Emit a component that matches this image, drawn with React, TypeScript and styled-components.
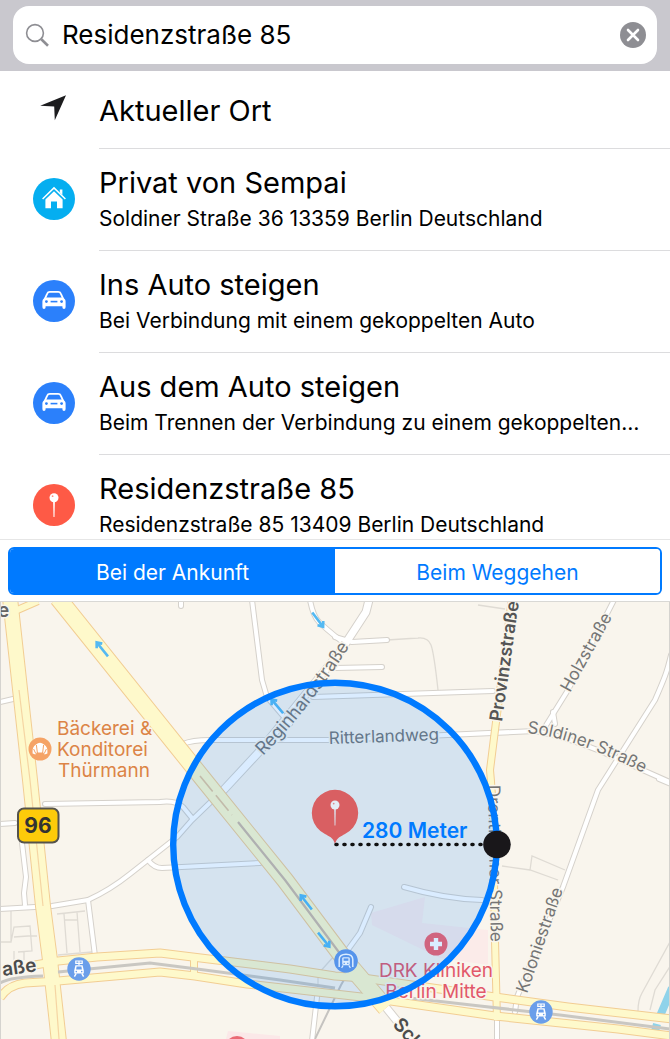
import React, { useState } from "react";
import styled, { createGlobalStyle } from "styled-components";

const GlobalStyle = createGlobalStyle`
  *, *::before, *::after { box-sizing: border-box; }
  body {
    margin: 0;
    background: #fff;
    color: #000;
    font-family: Inter, "Liberation Sans", sans-serif;
  }
  button, input { font: inherit; color: inherit; }
`;

const Page = styled.main`
  display: flex;
  flex-direction: column;
  min-height: 100vh;
`;

const SearchBar = styled.form`
  flex: none;
  padding: 6px 13px 7px;
  background: #c9c8ce;
`;

const SearchField = styled.label`
  display: flex;
  align-items: center;
  gap: 12px;
  height: 58px;
  padding: 0 11px 0 12px;
  border-radius: 16px;
  background: #fff;
`;

const SearchInput = styled.input`
  flex: 1;
  min-width: 0;
  padding: 0;
  border: 0;
  outline: 0;
  background: transparent;
  font-size: 26px;
  line-height: 36px;
`;

const ClearButton = styled.button`
  display: flex;
  flex: none;
  padding: 0;
  border: 0;
  background: none;
  cursor: pointer;
`;

const Results = styled.ul`
  flex: none;
  margin: 0;
  padding: 0;
  list-style: none;
`;

const ResultButton = styled.button`
  display: flex;
  align-items: flex-start;
  width: 100%;
  padding: 0 0 0 33px;
  border: 0;
  background: none;
  text-align: left;
  cursor: pointer;
`;

const IconSlot = styled.span<{ $compact?: boolean }>`
  display: flex;
  flex: none;
  width: 66px;
  padding-top: ${(p) => (p.$compact ? 16 : 29)}px;
`;

const Badge = styled.span<{ $color: string }>`
  display: flex;
  width: 42px;
  height: 42px;
  border-radius: 50%;
  background: ${(p) => p.$color};
`;

const ResultText = styled.span<{ $compact?: boolean; $last?: boolean }>`
  display: flex;
  flex: 1;
  flex-direction: column;
  gap: 6px;
  min-width: 0;
  padding: ${(p) => (p.$compact ? "22px 0 19px" : p.$last ? "16px 0 2px" : "16px 0 19px")};
  border-bottom: ${(p) => (p.$last ? "0" : "1px solid #dcdcde")};
`;

const Title = styled.span`
  font-size: 29px;
  line-height: 36px;
`;

const Subtitle = styled.span`
  font-size: 21px;
  line-height: 24px;
  white-space: nowrap;
`;

const SegmentBar = styled.div`
  flex: none;
  padding: 7px 8px 6px;
  border-top: 1px solid #e6e6e6;
  border-bottom: 1px solid #d9d8d5;
`;

const Segments = styled.div`
  display: grid;
  grid-template-columns: 1fr 1fr;
  overflow: hidden;
  border: 2px solid #007aff;
  border-radius: 6px;
`;

const Segment = styled.button<{ $active: boolean }>`
  height: 44px;
  padding: 4px 0 0;
  border: 0;
  background: ${(p) => (p.$active ? "#007aff" : "#fff")};
  color: ${(p) => (p.$active ? "#fff" : "#007aff")};
  font-size: 21px;
  line-height: 24px;
  cursor: pointer;
`;

const MapPane = styled.section`
  display: flex;
  flex: 1;
  min-height: 437px;
  background: #f9f5ed;
`;

const MapDrawing = styled.svg`
  flex: 1;
  width: 100%;
  min-width: 0;
  height: auto;
`;

const Label = styled.text<{ $size?: number; $weight?: number; $color?: string }>`
  font-size: ${(p) => p.$size ?? 17}px;
  font-weight: ${(p) => p.$weight ?? 400};
  fill: ${(p) => p.$color ?? "#757575"};
  stroke: #f9f5ed;
  stroke-width: 3px;
  stroke-linejoin: round;
  paint-order: stroke;
`;

const RadiusLabel = styled.text`
  font-size: 21px;
  font-weight: 600;
  fill: #007aff;
`;

const ShieldText = styled.text`
  font-size: 21px;
  font-weight: 700;
  fill: #333;
  text-anchor: middle;
`;

const SearchIcon = () => (
  <svg width="25" height="25" viewBox="0 0 25 25" fill="none" stroke="#8e8e93" aria-hidden="true">
    <circle cx="10" cy="10" r="8.4" strokeWidth="1.6" />
    <path d="M16.3 16.3 23 22.8" strokeWidth="2.6" />
  </svg>
);

const ClearIcon = () => (
  <svg width="26" height="26" viewBox="0 0 26 26" aria-hidden="true">
    <circle cx="13" cy="13" r="13" fill="#8e8e93" />
    <path d="m8 8 10 10M18 8 8 18" stroke="#fff" strokeWidth="2.6" strokeLinecap="round" />
  </svg>
);

const LocationIcon = () => (
  <svg width="42" height="42" viewBox="0 0 42 42" aria-hidden="true">
    <path d="M33 8.2 21.8 33.2 21.2 19.6 7.2 18.8Z" fill="#1c1c1e" />
  </svg>
);

const HomeIcon = () => (
  <svg width="42" height="42" viewBox="0 0 42 42" fill="#fff" aria-hidden="true">
    <path d="M21 13.2 12.4 21.4V30.2H18V23.4H24V30.2H29.6V21.4Z" />
    <path d="M9.6 21 21 9.9 32.4 21" fill="none" stroke="#fff" strokeWidth="1.5" />
    <path d="M26.8 11.4h2.6v5.6l-2.6-2.5Z" />
  </svg>
);

const CarIcon = () => (
  <svg width="42" height="42" viewBox="0 0 42 42" aria-hidden="true">
    <path
      d="M11.6 19.4 14.2 13.6Q14.9 11.9 16.8 11.9H25.2Q27.1 11.9 27.8 13.6L30.4 19.4"
      fill="none"
      stroke="#fff"
      strokeWidth="1.8"
    />
    <path
      d="M12 17.6H30L31.6 19Q32.6 20 32.6 21.4V27Q32.6 29 31 29T29.4 27.2V26.2H12.6V27.2Q12.6 29 11 29T9.4 27V21.4Q9.4 20 10.4 19Z"
      fill="#fff"
    />
    <circle cx="13.4" cy="21.6" r="1.4" fill="#2b80fb" />
    <circle cx="28.6" cy="21.6" r="1.4" fill="#2b80fb" />
    <path d="M17.6 21.6h6.8" stroke="#2b80fb" strokeWidth="1.6" />
  </svg>
);

const PinIcon = () => (
  <svg width="42" height="42" viewBox="0 0 42 42" aria-hidden="true">
    <path d="M20.1 17h1.8l-.4 16h-1Z" fill="#fff" />
    <circle cx="21" cy="13.7" r="4.5" fill="#fff" />
    <circle cx="19.6" cy="12.2" r=".9" fill="#ff8f80" />
  </svg>
);

interface Place {
  title: string;
  subtitle?: string;
  color?: string;
  icon: React.ReactNode;
}

const places: Place[] = [
  { title: "Aktueller Ort", icon: <LocationIcon /> },
  {
    title: "Privat von Sempai",
    subtitle: "Soldiner Straße 36 13359 Berlin Deutschland",
    color: "#05aef0",
    icon: <HomeIcon />,
  },
  {
    title: "Ins Auto steigen",
    subtitle: "Bei Verbindung mit einem gekoppelten Auto",
    color: "#2b80fb",
    icon: <CarIcon />,
  },
  {
    title: "Aus dem Auto steigen",
    subtitle: "Beim Trennen der Verbindung zu einem gekoppelten…",
    color: "#2b80fb",
    icon: <CarIcon />,
  },
  {
    title: "Residenzstraße 85",
    subtitle: "Residenzstraße 85 13409 Berlin Deutschland",
    color: "#fe5a46",
    icon: <PinIcon />,
  },
];

const sideStreets = [
  "M0 702 13 699",
  "M181 598V606",
  "M252 600 262 680 267 697 290 724",
  "M310 600Q313 616 319 622T340 640",
  "M335 637 352 642 387 640",
  "M335 668 382 667",
  "M313 697 493 691",
  "M183 744Q192 740 210 740L335 740 535 731Q560 735 600 751L672 783",
  "M614 600 568 690 545 727",
  "M553 712 555 724",
  "M671 655Q668 668 665 676T655 700L598 790 563 887 517 997 515 1012",
  "M659 779 671 784",
  "M45 804 160 802Q176 800 183 807L192 818",
  "M0 824 15 823",
  "M22 843 26 877 24 893 25 905",
  "M148 860Q154 868 162 868L260 863 268 860",
  "M88 900 95 956",
  "M317 997 312 1041",
  "M404 887Q445 899 482 900",
  "M371 907 360 933 347 951",
  "M0 909 52 906 88 900Q110 890 130 874L177 837 192 820 220 793",
  "M497 1018V1041",
];

const widerStreets = ["M369 600 366 612 340 652 258 753 218 796", "M384 1005 414 1042"];

const outlines = [
  "M387 640 418 638Q428 637 431 645T438 690",
  "M478 605 505 609",
  "M502 866 530 870 558 880M530 870 532 856 565 870",
  "M671 940 642 993Q638 1000 638 1011",
  "M671 965 655 990 650 1010",
  "M11 911V942H0M11 942 14 927 30 926 32 951 18 952M14 937 28 936M28 936H37M14 951V960M24 951V960",
  "M57 914 85 911M64 914 67 953M77 912 80 952M64 920H77M58 955 92 952",
  "M335 955 318 974V984",
];

const mainRoads = [
  { d: "M15 611 38 601", width: 6 },
  { d: "M512 598 496 722 490 770Q492 790 493 820L495 940 497 1020", width: 6 },
  { d: "M35 965 58 961 97 957 160 953 217 960 290 969 335 976 363 978 495 997 568 1007 672 1019", width: 7 },
  { d: "M0 998Q8 985 25 983L58 981 160 972 195 976 247 984 335 994 370 998 495 1016 618 1029 672 1036", width: 7 },
  { d: "M194 956V976", width: 6 },
  { d: "M10 598 30 780 43 906 50 960 59 1042", width: 14 },
  { d: "M58 598 204 780 285 880 345 960 386 1008", width: 16 },
];

const railways = [
  "M0 983Q10 977 43 976",
  "M58 972 150 963 197 969 280 980 335 988",
  "M410 998 480 1006 560 1015 670 1029",
];

const arrows = [
  { x: 102, y: 649, angle: -129 },
  { x: 318, y: 620, angle: 53 },
  { x: 277, y: 706, angle: -130 },
  { x: 306, y: 902, angle: -128 },
  { x: 324, y: 940, angle: 51 },
];

const TramMarker = ({ x, y }: { x: number; y: number }) => (
  <g transform={`translate(${x} ${y})`}>
    <circle r="11.7" fill="#6a9eea" />
    <path d="M-3.8-8H3.8M-3.2-8V-5.4M0-8V-4M3.2-8V-5.4M-3.8-5.6H3.8" stroke="#fff" strokeWidth="1.2" fill="none" />
    <path d="M-3.6-3.8H3.6L4.8 1.6V4.4H-4.8V1.6Z" fill="#fff" />
    <path d="M-2.4-2.4H2.4L2.9.4H-2.9Z" fill="#6a9eea" />
    <circle cx="-2.7" cy="2.6" r=".8" fill="#6a9eea" />
    <circle cx="2.7" cy="2.6" r=".8" fill="#6a9eea" />
    <path d="m-2.8 4.4-1.8 3.2M2.8 4.4l1.8 3.2" stroke="#fff" strokeWidth="1.4" />
  </g>
);

const RegionMap = () => (
  <MapDrawing
    viewBox="0 602 670 437"
    preserveAspectRatio="xMidYMid slice"
    role="img"
    aria-label="Umkreis von 280 Meter um Residenzstraße 85"
  >
    <rect y="602" width="670" height="437" fill="#f9f5ed" />
    <path d="M371 913 425 897 422 923 488 930V965L440 958 372 925Z" fill="#fbebe9" />
    <path d="M226 1039 228 1031 280 1036V1039Z" fill="#fbe8e8" />
    <path d="M672 988 660 1016M657 1024 654 1035" stroke="#8fd3ea" strokeWidth="8" fill="none" />

    <g fill="none" stroke="#dfdbd4" strokeWidth="1.3">
      {outlines.map((d) => <path key={d} d={d} />)}
    </g>
    <g fill="none" strokeLinecap="round" strokeLinejoin="round">
      <g stroke="#d5d1cb">
        {sideStreets.map((d) => <path key={d} d={d} strokeWidth="6" />)}
        {widerStreets.map((d) => <path key={d} d={d} strokeWidth="9" />)}
      </g>
      <path d="M352 966 341 985 314 1041" stroke="#c5c3c0" strokeWidth="2" />
      <g stroke="#fff">
        {sideStreets.map((d) => <path key={d} d={d} strokeWidth="4" />)}
        {widerStreets.map((d) => <path key={d} d={d} strokeWidth="7" />)}
      </g>
    </g>
    <g fill="none" strokeLinejoin="round">
      <g stroke="#f2cd93">
        {mainRoads.map((r) => <path key={r.d} d={r.d} strokeWidth={r.width + 2} />)}
      </g>
      <g stroke="#fef9cb">
        {mainRoads.map((r) => <path key={r.d} d={r.d} strokeWidth={r.width} />)}
      </g>
      <path d="M19 690 30 780 43 906M55 985 59 1039" stroke="#f5d5a3" strokeWidth="1.2" />
      <path d="M200 776 232 815" stroke="#e3c69c" strokeWidth="1.6" strokeDasharray="20 5" />
      <path d="M238 822 285 880 341 955" stroke="#cdb9a4" strokeWidth="2.2" />
    </g>
    <g fill="none" stroke="#c9c7c2" strokeWidth="3">
      {railways.map((d) => <path key={d} d={d} />)}
    </g>

    <g fill="none" stroke="#54b9f2" strokeWidth="2.6">
      {arrows.map((a) => (
        <path
          key={`${a.x}-${a.y}`}
          transform={`translate(${a.x} ${a.y}) rotate(${a.angle})`}
          d="M-9.5 0H8M4-3.6 8.5 0 4 3.6"
        />
      ))}
    </g>

    <defs>
      <path id="reginhardstrasse" d="M263 756Q318 700 362 626" />
      <path id="soldiner-strasse" d="M527 733Q580 738 660 782" />
    </defs>
    <Label $size={19} $weight={600} $color="#666" x="-2" y="617">e</Label>
    <Label $size={18}><textPath href="#reginhardstrasse">Reginhardstraße</textPath></Label>
    <Label transform="translate(329 744) rotate(-2)">Ritterlandweg</Label>
    <Label $size={18} $weight={600} $color="#555" transform="translate(502 722) rotate(-82)">Provinzstraße</Label>
    <Label transform="translate(570 693) rotate(-61)">Holzstraße</Label>
    <Label><textPath href="#soldiner-strasse">Soldiner Straße</textPath></Label>
    <Label transform="translate(488 785) rotate(89)">Drontheimer Straße</Label>
    <Label transform="translate(527 994) rotate(-71)">Koloniestraße</Label>
    <Label $size={19} $weight={600} $color="#4c4c4c" transform="translate(3 976) rotate(-8)">aße</Label>
    <Label $size={19} $weight={600} $color="#4c4c4c" transform="translate(392 1025) rotate(48)">Sch</Label>

    <g>
      <circle cx="40" cy="749" r="11.5" fill="#f5a366" />
      <path d="M32.6 753.4Q31.8 747 36 744.6L38 743.2Q40 742.4 42 743.2L44 744.6Q48.2 747 47.4 753.4L44.6 754.4 43.2 752.6H36.8L35.4 754.4Z" fill="#fff" />
      <path d="M36.4 745 37.4 753M43.6 745 42.6 753M33.6 749 35.8 753.6M46.4 749 44.2 753.6" stroke="#f5a366" strokeWidth="1" />
    </g>
    <Label $size={19} $color="#dc8446" x="57" y="735">Bäckerei &amp;</Label>
    <Label $size={19} $color="#dc8446" x="57" y="756">Konditorei</Label>
    <Label $size={19} $color="#dc8446" x="58" y="777">Thürmann</Label>

    <rect x="18" y="808.5" width="40.5" height="34" rx="6" fill="#fdcb0a" stroke="#55534c" strokeWidth="2" />
    <ShieldText x="38" y="833">96</ShieldText>

    <TramMarker x={79} y={969} />
    <TramMarker x={541} y={1012} />
    <circle cx="237" cy="1048" r="12" fill="#ea6a75" />
    <circle cx="436" cy="944" r="11.5" fill="#f4606a" />
    <path d="M436 938V950M430 944H442" stroke="#fff" strokeWidth="4.4" />
    <Label $size={19} $color="#e2586a" x="436" y="977" textAnchor="middle">DRK Kliniken</Label>
    <Label $size={19} $color="#e2586a" x="436" y="998" textAnchor="middle">Berlin Mitte</Label>

    <g transform="translate(346 961)">
      <circle r="11.8" fill="#6598e8" />
      <path d="M-6.8 6V-1.4Q-6.8-6.8 0-6.8T6.8-1.4V6" fill="none" stroke="#fff" strokeWidth="1.5" />
      <rect x="-3.8" y="-3.8" width="7.6" height="8" rx="1.4" fill="#fff" />
      <path d="M-2.4-1.4H2.4" stroke="#6598e8" strokeWidth="2.4" />
      <path d="M-2.4 2.3h1.2M1.2 2.3h1.2" stroke="#6598e8" strokeWidth="1.2" />
      <path d="m-2.8 4.4-1.6 2.4M2.8 4.4l1.6 2.4" stroke="#fff" strokeWidth="1.2" />
    </g>

    <circle cx="335" cy="844.5" r="161.5" fill="#007aff" fillOpacity=".145" />
    <circle cx="335" cy="844.5" r="161.8" fill="none" stroke="#007aff" strokeWidth="6.4" />

    <path d="M335 844C333 837 329 836.5 325 834A23.2 23.2 0 1 1 345 834C341 836.5 337 837 335 844Z" fill="#d95f62" />
    <path d="M334.2 808H335.8L335.4 825.5H334.6Z" fill="#dde8f2" />
    <circle cx="335" cy="805" r="4.5" fill="#e4edf6" />
    <circle cx="333.7" cy="803.6" r=".9" fill="#d98a90" />

    <path d="M336 844.5H486" stroke="#111" strokeWidth="3.6" strokeLinecap="round" strokeDasharray="1 7" />
    <circle cx="497" cy="844.5" r="13.8" fill="#19171a" />
    <RadiusLabel x="362" y="838">280 Meter</RadiusLabel>
    <path d="M.5 602V1039M669.5 602V1039" stroke="#d5d3cf" strokeWidth="1" />
  </MapDrawing>
);

const triggers = ["Bei der Ankunft", "Beim Weggehen"];

export default function App() {
  const [query, setQuery] = useState("Residenzstraße 85");
  const [trigger, setTrigger] = useState(0);

  return (
    <Page>
      <GlobalStyle />
      <SearchBar role="search" onSubmit={(e) => e.preventDefault()}>
        <SearchField>
          <SearchIcon />
          <SearchInput
            type="text"
            aria-label="Ort suchen"
            value={query}
            onChange={(e) => setQuery(e.target.value)}
          />
          <ClearButton type="button" aria-label="Suche löschen" onClick={() => setQuery("")}>
            <ClearIcon />
          </ClearButton>
        </SearchField>
      </SearchBar>

      <Results>
        {places.map((place, index) => (
          <li key={place.title}>
            <ResultButton type="button">
              <IconSlot $compact={!place.subtitle}>
                <Badge $color={place.color ?? "transparent"}>{place.icon}</Badge>
              </IconSlot>
              <ResultText $compact={!place.subtitle} $last={index === places.length - 1}>
                <Title>{place.title}</Title>
                {place.subtitle && <Subtitle>{place.subtitle}</Subtitle>}
              </ResultText>
            </ResultButton>
          </li>
        ))}
      </Results>

      <SegmentBar>
        <Segments role="group" aria-label="Auslöser">
          {triggers.map((name, index) => (
            <Segment
              key={name}
              type="button"
              $active={trigger === index}
              aria-pressed={trigger === index}
              onClick={() => setTrigger(index)}
            >
              {name}
            </Segment>
          ))}
        </Segments>
      </SegmentBar>

      <MapPane>
        <RegionMap />
      </MapPane>
    </Page>
  );
}
